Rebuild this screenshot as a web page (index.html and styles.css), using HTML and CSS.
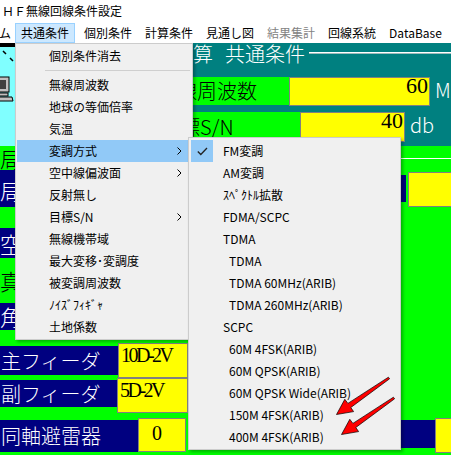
FILE: index.html
```html
<!DOCTYPE html>
<html lang="ja">
<head>
<meta charset="utf-8">
<title>ＨＦ無線回線条件設定</title>
<link rel="stylesheet" href="styles.css">
</head>
<body>
<div class="window">
  <div class="titlebar">ＨＦ無線回線条件設定</div>
  <div class="menubar">
    <span class="mb-item first">ム</span>
    <span class="mb-item open">共通条件</span>
    <span class="mb-item">個別条件</span>
    <span class="mb-item">計算条件</span>
    <span class="mb-item">見通し図</span>
    <span class="mb-item disabled">結果集計</span>
    <span class="mb-item">回線系統</span>
    <span class="mb-item">DataBase</span>
  </div>
  <div class="client">
    <div class="top">
      <div class="top-left">
        <div class="cyan-panel">
          <svg class="pc-icon" width="20" height="60" viewBox="0 0 20 60">
            <path d="M3 4 L6 7 M10 11 L13 14" stroke="#000" stroke-width="1.5" fill="none"/>
            <rect x="-6" y="30" width="15" height="15" fill="#c0c0c0" stroke="#000" stroke-width="1"/>
            <rect x="-3" y="33" width="9" height="9" fill="#404040"/>
            <rect x="-4" y="46" width="12" height="3" fill="#c0c0c0" stroke="#000" stroke-width="1"/>
            <path d="M-6 50 L12 50 L13 54 L-6 54 Z" fill="#c0c0c0" stroke="#000" stroke-width="1"/>
          </svg>
        </div>
      </div>
      <div class="top-right">
        <div class="heading"><span class="h-pre">計算</span><span class="h-main">共通条件</span><span class="h-rule"></span></div>
        <div class="field-row row-freq">
          <div class="g-label freq-label">無線周波数</div>
          <div class="ybox num freq-box">60</div>
          <div class="unit">MHz</div>
        </div>
        <div class="field-row row-sn">
          <div class="g-label sn-label">目標S/N</div>
          <div class="ybox num sn-box">40</div>
          <div class="unit">db</div>
        </div>
      </div>
    </div>
    <div class="bottom">
      <div class="bottom-left">
        <div class="band b1">局</div>
        <div class="band b2">局</div>
        <div class="band b3"></div>
        <div class="band b4">空</div>
        <div class="band b5">真</div>
        <div class="band b6">角</div>
        <div class="band b7"></div>
        <div class="frow r-main">
          <div class="nlabel">主フィーダ</div>
          <div class="ytext">10D-2V</div>
        </div>
        <div class="frow r-sub">
          <div class="nlabel">副フィーダ</div>
          <div class="ytext">5D-2V</div>
        </div>
        <div class="frow r-arr">
          <div class="nlabel">同軸避雷器</div>
          <div class="ytext">0</div>
        </div>
      </div>
      <div class="bottom-right">
        <div class="hline"></div>
        <div class="rrow rrow1">
          <div class="rnavy"></div>
          <div class="ryellow"></div>
        </div>
        <div class="rrow rrow2">
          <div class="rnavy"></div>
          <div class="ryellow"></div>
        </div>
      </div>
    </div>

    <div class="menu">
      <div class="mi">個別条件消去</div>
      <div class="sep"></div>
      <div class="mi">無線周波数</div>
      <div class="mi">地球の等価倍率</div>
      <div class="mi">気温</div>
      <div class="mi hl">変調方式<svg class="chev" width="5" height="8" viewBox="0 0 5 8"><path d="M0.5 0.5 L4 4 L0.5 7.5" stroke="#000" stroke-width="1" fill="none"/></svg></div>
      <div class="mi">空中線偏波面<svg class="chev" width="5" height="8" viewBox="0 0 5 8"><path d="M0.5 0.5 L4 4 L0.5 7.5" stroke="#000" stroke-width="1" fill="none"/></svg></div>
      <div class="mi">反射無し</div>
      <div class="mi">目標S/N<svg class="chev" width="5" height="8" viewBox="0 0 5 8"><path d="M0.5 0.5 L4 4 L0.5 7.5" stroke="#000" stroke-width="1" fill="none"/></svg></div>
      <div class="mi">無線機帯域</div>
      <div class="mi">最大変移･変調度</div>
      <div class="mi">被変調周波数</div>
      <div class="mi">ﾉｲｽﾞﾌｨｷﾞｬ</div>
      <div class="mi">土地係数</div>
    </div>

    <div class="submenu">
      <div class="si checked"><span class="checkbox"><svg width="11" height="9" viewBox="0 0 11 9"><path d="M0.8 4.5 L3.8 7.5 L10 1" stroke="#222" stroke-width="1.3" fill="none"/></svg></span>FM変調</div>
      <div class="si">AM変調</div>
      <div class="si">ｽﾍﾟｸﾄﾙ拡散</div>
      <div class="si">FDMA/SCPC</div>
      <div class="si">TDMA</div>
      <div class="si ind">TDMA</div>
      <div class="si ind">TDMA 60MHz(ARIB)</div>
      <div class="si ind">TDMA 260MHz(ARIB)</div>
      <div class="si">SCPC</div>
      <div class="si ind">60M 4FSK(ARIB)</div>
      <div class="si ind">60M QPSK(ARIB)</div>
      <div class="si ind">60M QPSK Wide(ARIB)</div>
      <div class="si ind">150M 4FSK(ARIB)</div>
      <div class="si ind">400M 4FSK(ARIB)</div>
    </div>

    <svg class="arrows" width="72" height="72" viewBox="0 0 72 72">
      <polygon points="59.6,8.8 20.8,37.5 23.6,41.6 6.5,44.5 14.8,29.3 17.9,33.4 58.4,7.2" fill="#ff0000" stroke="#000" stroke-width="0.7"/>
      <polygon transform="translate(5,20)" points="59.6,8.8 20.8,37.5 23.6,41.6 6.5,44.5 14.8,29.3 17.9,33.4 58.4,7.2" fill="#ff0000" stroke="#000" stroke-width="0.7"/>
    </svg>
  </div>
</div>
</body>
</html>
```

FILE: styles.css
```css
* { box-sizing: border-box; }
html, body { margin: 0; padding: 0; }
body {
  font-family: "Noto Sans CJK JP", "Noto Sans", sans-serif;
  font-size: 12px;
  color: #000;
  background: #fff;
}
.window {
  width: 451px;
  height: 455px;
  overflow: hidden;
  position: relative;
  background: #fff;
}
.titlebar {
  height: 22px;
  line-height: 22px;
  padding-left: 2px;
  font-size: 12px;
  background: #fff;
  white-space: nowrap;
}
.menubar {
  height: 21px;
  padding-top: 1px;
  display: flex;
  gap: 1px;
  background: #fff;
  white-space: nowrap;
  overflow: hidden;
}
.mb-item {
  flex-shrink: 0;
  height: 20px;
  line-height: 18px;
  padding: 0 5px;
  border: 1px solid transparent;
}
.mb-item.first { padding: 0 2px 0 0; margin-left: -2px; }
.mb-item.open { background: #cce8ff; border-color: #99d1ff; margin-right: 2px; }
.mb-item.disabled { color: #838383; }

.client {
  position: relative;
  height: 412px;
  overflow: hidden;
}

/* top teal section */
.top {
  height: 103px;
  display: grid;
  grid-template-columns: 157px 294px;
  background: #008080;
}
.cyan-panel {
  width: 120px;
  height: 100%;
  background: #80ffff;
  border-top: 4px solid #000;
}
.pc-icon { display: block; }
.top-right {
  display: flex;
  flex-direction: column;
  white-space: nowrap;
  min-width: 0;
}
.heading {
  height: 34px;
  display: flex;
  align-items: flex-start;
  padding-left: 16px;
  color: #fff;
  font-size: 20px;
  line-height: 22px;
  font-weight: 300;
}
.heading > span { flex-shrink: 0; }
.h-main { margin-left: 12px; }
.heading .h-rule {
  flex: 1 0 0;
  margin-left: 4px;
  margin-top: 9px;
  height: 2px;
  border-top: 1px solid #fff;
  border-bottom: 1px solid #9fbcbc;
}
.field-row { display: flex; align-items: flex-start; }
.field-row > * { flex-shrink: 0; }
.row-freq { height: 35px; }
.row-sn { height: 34px; }
.g-label {
  background: #00ff00;
  color: #000;
  font-size: 20px;
  font-weight: 300;
  line-height: 28px;
  height: 28px;
  white-space: nowrap;
  overflow: hidden;
}
.freq-label { width: 132px; padding-left: 0; }
.sn-label { width: 143px; height: 30px; line-height: 30px; padding-left: 3px; }
.ybox {
  background: #ffff00;
  border: 1px solid #808080;
}
.num {
  font-family: "Liberation Serif", serif;
  font-size: 22px;
  line-height: 16px;
  text-align: right;
  padding-right: 1px;
}
.freq-box { width: 141px; height: 29px; }
.sn-box { width: 105px; height: 30px; }
.unit {
  color: #fff;
  font-size: 20px;
  font-weight: 300;
  line-height: 26px;
  margin-left: 5px;
}

/* bottom green section */
.bottom {
  height: 309px;
  display: grid;
  grid-template-columns: 188px 263px;
  background: #00ff00;
}
.bottom-left { display: flex; flex-direction: column; min-width: 0; }
.band {
  flex-shrink: 0;
  width: 140px;
  font-size: 22px;
  font-weight: 300;
  white-space: nowrap;
  overflow: hidden;
}
.b1 { height: 24px; line-height: 24px; color: #000; }
.b2 { height: 37px; line-height: 33px; padding-top: 4px; background: #000080; color: #fff; }
.b3 { height: 21px; }
.b4 { height: 30px; line-height: 30px; background: #000080; color: #fff; }
.b5 { height: 45px; line-height: 24px; padding-top: 10px; color: #000; }
.b6 { height: 27px; line-height: 27px; background: #000080; color: #fff; }
.b7 { height: 13px; }
.frow { display: flex; align-items: flex-start; height: 35px; flex-shrink: 0; }
.frow > * { flex-shrink: 0; }
.nlabel {
  background: #000080;
  color: #fff;
  font-size: 20px;
  font-weight: 300;
  white-space: nowrap;
  padding-left: 1px;
}
.ytext {
  background: #ffff00;
  border: 1px solid #808080;
  font-family: "Liberation Serif", serif;
  font-size: 20px;
  letter-spacing: -2.5px;
  line-height: 18px;
  padding: 2px 2px;
  height: 35px;
  white-space: nowrap;
}
.r-main .nlabel { width: 118px; height: 29px; line-height: 29px; margin-top: 3px; }
.r-main .ytext { width: 70px; }
.r-sub .nlabel { width: 117px; height: 27px; line-height: 27px; margin-top: 2px; }
.r-sub .ytext { width: 71px; }
.r-arr { margin-top: 5px; }
.r-arr .nlabel { width: 138px; height: 32px; line-height: 32px; margin-top: 2px; }
.r-arr .ytext { width: 48px; height: 34px; padding-left: 13px; padding-top: 5px; }

.bottom-right { display: flex; flex-direction: column; min-width: 0; overflow: hidden; }
.hline { margin-top: 12px; height: 1px; background: #fff; flex-shrink: 0; }
.rrow { display: flex; align-items: flex-start; flex-shrink: 0; }
.rrow > * { flex-shrink: 0; }
.rnavy { background: #000080; }
.ryellow { background: #ffff00; border: 1px solid #808080; }
.rrow1 { margin-top: 13px; margin-left: 178px; gap: 2px; }
.rrow1 .rnavy { width: 40px; height: 27px; margin-top: 3px; }
.rrow1 .ryellow { width: 50px; height: 35px; }
.rrow2 { margin-top: 211px; margin-left: 172px; }
.rrow2 .rnavy { width: 75px; height: 28px; margin-top: 2px; }
.rrow2 .ryellow { width: 30px; height: 35px; }

/* dropdown menus */
.menu, .submenu {
  position: absolute;
  background: #f0f0f0;
  border: 1px solid #cccccc;
  box-shadow: 2px 2px 3px rgba(0, 0, 0, 0.3);
  font-size: 12px;
  white-space: nowrap;
}
.menu {
  left: 15px;
  top: 0;
  width: 178px;
  height: 297px;
  padding: 1px;
}
.mi {
  position: relative;
  height: 22px;
  line-height: 22px;
  padding-left: 32px;
}
.mi.hl { background: #91c9f7; }
.chev { position: absolute; right: 9px; top: 7px; }
.sep { height: 7px; position: relative; }
.sep::after {
  content: "";
  position: absolute;
  left: 28px;
  right: 1px;
  top: 3px;
  height: 1px;
  background: #cfcfcf;
}
.submenu {
  left: 188px;
  top: 94px;
  width: 213px;
  height: 313px;
  padding: 2px 2px 1px;
}
.si {
  position: relative;
  height: 22px;
  line-height: 22px;
  padding-left: 32px;
}
.si.ind { padding-left: 38px; }
.checkbox {
  position: absolute;
  left: 0;
  top: 0;
  width: 22px;
  height: 22px;
  background: #91c9f7;
  display: flex;
  align-items: center;
  justify-content: center;
}
.checkbox svg { display: block; }
.arrows {
  position: absolute;
  left: 330px;
  top: 327px;
}
```
